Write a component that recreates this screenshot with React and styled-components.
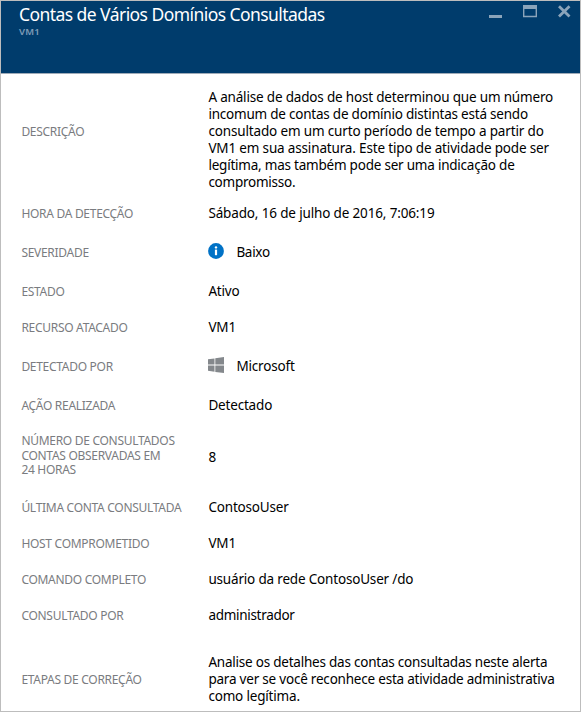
import React from "react";
import styled, { createGlobalStyle } from "styled-components";

const Global = createGlobalStyle`
  * { box-sizing: border-box; }
  body { margin: 0; background: #fff; font-family: "Noto Sans", "Open Sans", sans-serif; }
`;
const Blade = styled.main`
  width: 581px;
  height: 712px;
  background: #fff;
  border: 1px solid #bdbdbd;
`;
const Header = styled.header`
  height: 73px;
  background: #003c6c;
  border-bottom: 1px solid #9fabb8;
  color: #fff;
  display: flex;
  justify-content: space-between;
  padding: 2px 8px 0 18px;
`;
const Title = styled.h1`
  margin: 0;
  font-size: 17.5px;
  font-weight: 400;
  line-height: 22px;
  letter-spacing: -0.56px;
  white-space: nowrap;
`;
const Subtitle = styled.div`
  font-size: 9.5px;
  line-height: 14px;
  font-weight: 600;
  letter-spacing: 0.2px;
  color: #7f9db8;
`;
const Controls = styled.svg`
  width: 83px;
  height: 14px;
  margin-top: 2px;
  color: #8ba4ba;
`;
const Details = styled.dl`
  margin: 0;
  padding-top: 10px;
`;
const Row = styled.div`
  display: grid;
  grid-template-columns: 187px 1fr;
  align-items: center;
  height: ${(p) => p.$height}px;
  margin-top: ${(p) => p.$gap || 0}px;
  padding-left: 20px;
`;
const Label = styled.dt`
  font-size: 12px;
  line-height: 14.5px;
  letter-spacing: -0.29px;
  color: #7a7c80;
  white-space: pre-line;
  padding-top: 2px;
  padding-left: 0.4px;
  padding-bottom: ${(p) => p.$lift || 0}px;
`;
const Value = styled.dd`
  margin: 0;
  display: flex;
  align-items: center;
  font-size: 13.5px;
  line-height: 17px;
  color: #000;
  white-space: nowrap;
  padding-left: 0.4px;
`;
const Line = styled.span`
  display: block;
  letter-spacing: ${(p) => p.$track ?? -0.18}px;
`;
const Icon = styled.svg`
  width: 16px;
  height: 16px;
  margin: 0 12px 2px 0;
`;

const InfoIcon = () => (
  <Icon viewBox="0 0 16 16">
    <circle cx="8" cy="8" r="7.9" fill="#0072c6" />
    <circle cx="8" cy="4.4" r="1.2" fill="#fff" />
    <path d="M6.9 6.6h2.2v5.6H6.9z" fill="#fff" />
  </Icon>
);
const WindowsIcon = () => (
  <Icon viewBox="0 0 16 16">
    <path
      fill="#84888c"
      d="M0 2.3 6.5 1.4V7.6H0zM7.3 1.3 16 0V7.6H7.3zM0 8.5H6.5V14.7L0 13.8zM7.3 8.5H16V16L7.3 14.9z"
    />
  </Icon>
);

const rows = [
  {
    height: 111,
    lift: 16,
    label: "DESCRIÇÃO",
    value: [
      ["A análise de dados de host determinou que um número", -0.18],
      ["incomum de contas de domínio distintas está sendo", -0.22],
      ["consultado em um curto período de tempo a partir do", -0.15],
      ["VM1 em sua assinatura. Este tipo de atividade pode ser", -0.16],
      ["legítima, mas também pode ser uma indicação de", -0.22],
      ["compromisso.", -0.25],
    ],
  },
  { height: 37, label: "HORA DA DETECÇÃO", value: [["Sábado, 16 de julho de 2016, 7:06:19", -0.15]] },
  { height: 40, label: "SEVERIDADE", value: [["Baixo", -0.3]], icon: <InfoIcon /> },
  { height: 38, label: "ESTADO", value: [["Ativo"]] },
  { height: 34, label: "RECURSO ATACADO", value: [["VM1"]] },
  { height: 44, label: "DETECTADO POR", value: [["Microsoft"]], icon: <WindowsIcon /> },
  { height: 34, label: "AÇÃO REALIZADA", value: [["Detectado"]] },
  {
    height: 70,
    lift: 4,
    label: "NÚMERO DE CONSULTADOS\nCONTAS OBSERVADAS EM\n24 HORAS",
    value: [["8"]],
  },
  { height: 30, label: "ÚLTIMA CONTA CONSULTADA", value: [["ContosoUser"]] },
  { height: 42, label: "HOST COMPROMETIDO", value: [["VM1"]] },
  { height: 30, label: "COMANDO COMPLETO", value: [["usuário da rede ContosoUser /do"]] },
  { height: 42, label: "CONSULTADO POR", value: [["administrador", -0.3]] },
  {
    height: 52,
    gap: 17,
    label: "ETAPAS DE CORREÇÃO",
    value: [
      ["Analise os detalhes das contas consultadas neste alerta", -0.22],
      ["para ver se você reconhece esta atividade administrativa", -0.21],
      ["como legítima.", -0.18],
    ],
  },
];

export default function App() {
  return (
    <>
      <Global />
      <Blade>
        <Header>
          <div>
            <Title>Contas de Vários Domínios Consultadas</Title>
            <Subtitle>VM1</Subtitle>
          </div>
          <Controls viewBox="0 0 83 14" fill="none" stroke="currentColor">
            <path d="M0 11.5H13" strokeWidth="3" />
            <path d="M34 2H48" strokeWidth="4" />
            <path d="M34.7 2V11.5H47.3V2" strokeWidth="1.4" />
            <path d="M70 1.3 80.5 11.5M80.5 1.3 70 11.5" strokeWidth="2.8" />
          </Controls>
        </Header>
        <Details>
          {rows.map((row) => (
            <Row key={row.label} $height={row.height} $gap={row.gap}>
              <Label $lift={row.lift}>{row.label}</Label>
              <Value>
                {row.icon}
                <div>
                  {row.value.map(([text, track]) => (
                    <Line key={text} $track={track}>
                      {text}
                    </Line>
                  ))}
                </div>
              </Value>
            </Row>
          ))}
        </Details>
      </Blade>
    </>
  );
}
